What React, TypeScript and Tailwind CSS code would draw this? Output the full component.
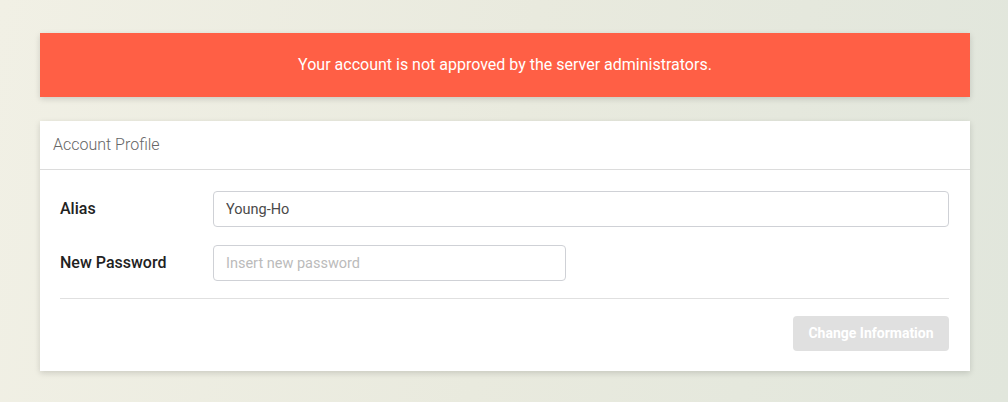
export default function App() {
  return (
    <div
      className="min-h-[402px] w-full px-[40px] pt-[33px] pb-[31px] bg-[linear-gradient(100deg,#f1f0e5_0%,#e9eade_50%,#e1e6dc_100%)]"
      style={{ fontFamily: "Roboto, 'Noto Sans', sans-serif" }}
    >
      <div className="w-[930px] h-[64px] bg-[#ff5f45] flex items-center justify-center shadow-[0_2px_6px_rgba(0,0,0,0.15)]">
        <span className="text-white text-[16px] leading-none">Your account is not approved by the server administrators.</span>
      </div>
      <div className="mt-[24px] w-[930px] bg-white shadow-[0_2px_6px_rgba(0,0,0,0.15)]">
        <div className="h-[49px] border-b border-[#dcdcdc] flex items-center pl-[13px]">
          <span className="text-[16px] font-light text-[#666]">Account Profile</span>
        </div>
        <div className="pt-[21px] pb-[20px] pl-[20px] pr-[21px]">
          <div className="flex items-center">
            <label className="w-[153px] text-[16px] font-medium text-[#222]">Alias</label>
            <input
              defaultValue="Young-Ho"
              className="flex-1 h-[36px] border border-[#cfd1d6] rounded-[4px] px-[12px] text-[14.5px] text-[#4a4a4a] outline-none"
            />
          </div>
          <div className="flex items-center mt-[18px]">
            <label className="w-[153px] text-[16px] font-medium text-[#222]">New Password</label>
            <input
              type="password"
              placeholder="Insert new password"
              className="w-[353px] h-[36px] border border-[#cfd1d6] rounded-[4px] px-[12px] text-[14.5px] text-[#4a4a4a] placeholder:text-[#bbb] outline-none"
            />
          </div>
          <div className="mt-[17px] border-t border-[#e0e0e0]" />
          <div className="mt-[17px] flex justify-end">
            <button className="w-[156px] h-[35px] rounded-[4px] bg-[#e0e0e0] text-white text-[14px] font-bold">Change Information</button>
          </div>
        </div>
      </div>
    </div>
  );
}
